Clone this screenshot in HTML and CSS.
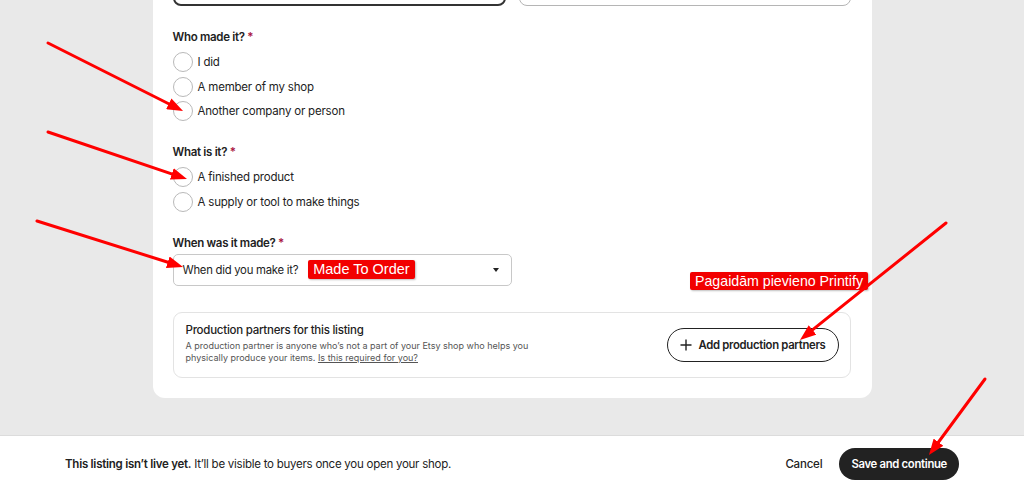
FILE: index.html
```html
<!DOCTYPE html>
<html lang="en">
<head>
<meta charset="utf-8">
<title>Listing details</title>
<link rel="stylesheet" href="styles.css">
</head>
<body>
<div class="page">
  <main class="card">
    <div class="inputs-row">
      <div class="input input-active"></div>
      <div class="input"></div>
    </div>

    <section class="field">
      <div class="field-label">Who made it? <span class="req">*</span></div>
      <div class="radios">
        <label class="radio"><span class="circle"></span><span>I did</span></label>
        <label class="radio"><span class="circle"></span><span>A member of my shop</span></label>
        <label class="radio"><span class="circle"></span><span>Another company or person</span></label>
      </div>
    </section>

    <section class="field field-2">
      <div class="field-label">What is it? <span class="req">*</span></div>
      <div class="radios">
        <label class="radio"><span class="circle"></span><span>A finished product</span></label>
        <label class="radio"><span class="circle"></span><span>A supply or tool to make things</span></label>
      </div>
    </section>

    <section class="field field-3">
      <div class="field-label">When was it made? <span class="req">*</span></div>
      <div class="select">
        <span class="select-text">When did you make it?</span>
        <span class="note note-inline">Made To Order</span>
        <span class="caret"></span>
      </div>
    </section>

    <section class="partners">
      <div class="partners-text">
        <div class="partners-title">Production partners for this listing</div>
        <p class="partners-desc"><span class="desc-line">A production partner is anyone who’s not a part of your Etsy shop who helps you</span> <span class="desc-line">physically produce your items. <a class="link" href="#">Is this required for you?</a></span></p>
      </div>
      <button class="btn-outline" type="button">
        <svg class="plus" width="12" height="12" viewBox="0 0 12 12"><path d="M6 0.5V11.5M0.5 6H11.5" stroke="#222" stroke-width="1.4" fill="none"/></svg>
        <span>Add production partners</span>
      </button>
    </section>
  </main>

  <div class="spacer"></div>

  <footer class="bottom-bar">
    <p class="status"><strong>This listing isn’t live yet.</strong> It’ll be visible to buyers once you open your shop.</p>
    <div class="actions">
      <button class="btn-text" type="button">Cancel</button>
      <button class="btn-dark" type="button">Save and continue</button>
    </div>
  </footer>
</div>

<span class="note note-float">Pagaidām pievieno Printify</span>

<svg class="arrows" width="1024" height="492" viewBox="0 0 1024 492">
  <defs>
    <marker id="ah" markerWidth="16" markerHeight="12" refX="6" refY="6" orient="auto" markerUnits="userSpaceOnUse">
      <path d="M0,0 L16,6 L0,12 z" fill="#f00"/>
    </marker>
  </defs>
  <g stroke="#f00" stroke-width="3" stroke-linecap="round" fill="none">
    <line x1="48" y1="43" x2="174.1" y2="106.5" marker-end="url(#ah)"/>
    <line x1="48" y1="132" x2="177.5" y2="175.8" marker-end="url(#ah)"/>
    <line x1="37" y1="221" x2="173.5" y2="264" marker-end="url(#ah)"/>
    <line x1="946" y1="223" x2="807.8" y2="333.7" marker-end="url(#ah)"/>
    <line x1="985" y1="379" x2="934.9" y2="447" marker-end="url(#ah)"/>
  </g>
</svg>
</body>
</html>
```

FILE: styles.css
```css
* { box-sizing: border-box; }

html, body {
  margin: 0;
  padding: 0;
  width: 1024px;
  height: 492px;
  overflow: hidden;
  background: #e9e9e9;
  font-family: Inter, "Liberation Sans", Arial, sans-serif;
  color: #222;
}

.page {
  display: flex;
  flex-direction: column;
  height: 492px;
}

.card {
  width: 719px;
  margin: 0 auto;
  background: #fff;
  border-radius: 0 0 12px 12px;
  padding: 0 21px 20px 20px;
  display: flex;
  flex-direction: column;
}

.inputs-row {
  display: flex;
  gap: 13px;
  margin-top: -26px;
}

.input {
  flex: 1;
  height: 32px;
  border: 1px solid #b5b5b5;
  border-radius: 8px;
}

.input-active {
  border: 2px solid #333;
}

.field {
  margin-top: 22px;
  display: flex;
  flex-direction: column;
}

.field-label {
  font-size: 11.5px;
  font-weight: 600;
  line-height: 18px;
  letter-spacing: -0.3px;
}

.req {
  color: #a8123e;
}

.radios {
  margin-top: 6px;
  display: flex;
  flex-direction: column;
  gap: 4.5px;
}

.radio {
  display: flex;
  align-items: center;
  gap: 5px;
  height: 20px;
  font-size: 11.5px;
  letter-spacing: -0.2px;
}

.circle {
  width: 20px;
  height: 20px;
  border: 1px solid #b9b9b9;
  border-radius: 50%;
  background: #fff;
  flex: none;
}

.select {
  margin-top: 2px;
  width: 339px;
  height: 32px;
  border: 1px solid #c8c8c8;
  border-radius: 5px;
  display: flex;
  align-items: center;
  padding: 0 12px 0 9px;
  font-size: 11.3px;
  letter-spacing: -0.25px;
}

.select-text { color: #222; }

.caret {
  margin-left: auto;
  width: 0;
  height: 0;
  border-left: 3.5px solid transparent;
  border-right: 3.5px solid transparent;
  border-top: 4px solid #222;
}

.note {
  background: #f20000;
  color: #fff;
  font-family: "Liberation Sans", Arial, sans-serif;
  font-size: 14.5px;
  line-height: 19px;
  letter-spacing: 0;
  border-radius: 2px;
  white-space: nowrap;
  box-shadow: 1px 1px 2px rgba(0,0,0,0.25);
}

.note-inline {
  margin-left: 10px;
  padding: 0 5px;
}

.note-float {
  position: absolute;
  left: 690px;
  top: 272px;
  padding: 0 5px;
  font-size: 14.2px;
  line-height: 18px;
}

.partners {
  margin-top: 26px;
  height: 66px;
  border: 1px solid #e3e3e3;
  border-radius: 9px;
  display: flex;
  align-items: center;
  justify-content: space-between;
  padding: 0 11px 0 12px;
}

.partners-text {
  width: 380px;
  margin-top: -4px;
}

.partners-title {
  font-size: 11.5px;
  font-weight: 500;
  line-height: 16px;
  letter-spacing: -0.25px;
}

.partners-desc {
  margin: 2px 0 0;
  display: flex;
  flex-direction: column;
  gap: 0;
  font-size: 9px;
  line-height: 12px;
  color: #555;
}

.desc-line {
  display: block;
  height: 12px;
  white-space: nowrap;
}

.link {
  color: #555;
  text-decoration: underline;
}

.btn-outline {
  display: flex;
  align-items: center;
  gap: 7px;
  height: 34px;
  padding: 0 12px 0 12px;
  border: 1.5px solid #222;
  border-radius: 17px;
  background: #fff;
  font-family: inherit;
  font-size: 11.3px;
  font-weight: 600;
  color: #222;
  letter-spacing: -0.3px;
}

.spacer {
  flex: 1;
}

.bottom-bar {
  height: 57px;
  background: #fff;
  border-top: 1px solid #dcdcdc;
  display: flex;
  align-items: center;
  justify-content: space-between;
  padding: 0 65px;
}

.status {
  margin: 0;
  font-size: 11.5px;
  color: #222;
  letter-spacing: -0.25px;
}

.status strong { font-weight: 600; }

.actions {
  display: flex;
  align-items: center;
  gap: 17px;
}

.btn-text {
  border: 0;
  background: none;
  padding: 0;
  font-family: inherit;
  font-size: 11.5px;
  font-weight: 500;
  color: #222;
  letter-spacing: -0.2px;
}

.btn-dark {
  height: 32px;
  padding: 0 12px;
  border: 0;
  border-radius: 16px;
  background: #222;
  color: #fff;
  font-family: inherit;
  font-size: 11.3px;
  font-weight: 600;
  letter-spacing: -0.3px;
}

.arrows {
  position: absolute;
  left: 0;
  top: 0;
  pointer-events: none;
}
```
